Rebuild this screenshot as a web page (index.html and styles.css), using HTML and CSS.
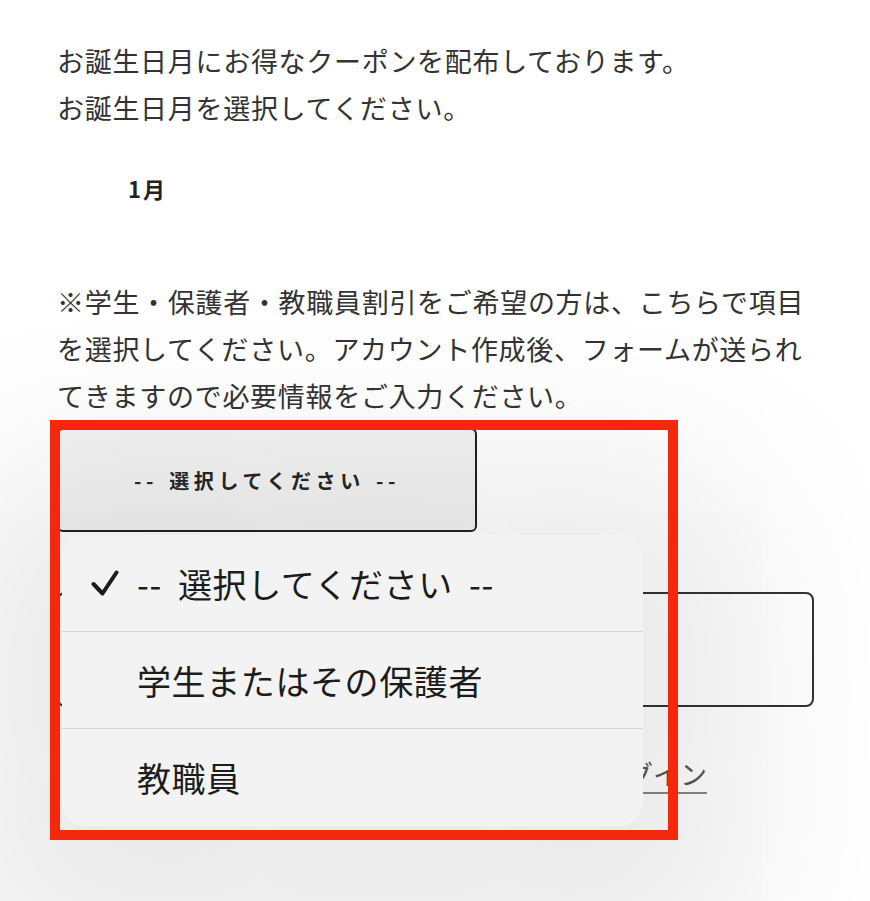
FILE: index.html
```html
<!DOCTYPE html>
<html lang="ja">
<head>
  <meta charset="UTF-8" />
  <meta name="viewport" content="width=device-width, initial-scale=1.0" />
  <title>会員登録</title>
  <link rel="stylesheet" href="styles.css">
</head>
<body>
  <div class="container">
    <p class="lead">お誕生日月にお得なクーポンを配布しております。<br>お誕生日月を選択してください。</p>
    <div class="month">1月</div>
    <p class="note">※学生・保護者・教職員割引をご希望の方は、こちらで項目を選択してください。アカウント作成後、フォームが送られてきますので必要情報をご入力ください。</p>
    <div class="select-btn">-- 選択してください --</div>
    <div class="input-box"></div>
    <a class="login-link" href="#">ログイン</a>
  </div>

  <!-- 選択メニュー -->
  <div class="picker">
    <div class="option">
      <span class="check">
        <svg width="28" height="26" viewBox="0 0 28 26"><path d="M2.5 14 L11.5 23.5 L25.5 2.5" fill="none" stroke="#1c1c1c" stroke-width="4" stroke-linecap="round" stroke-linejoin="round"/></svg>
      </span>-- 選択してください --
    </div>
    <div class="option"><span class="check"></span>学生またはその保護者</div>
    <div class="option"><span class="check"></span>教職員</div>
  </div>

  <!-- 赤枠 -->
  <div class="highlight"></div>
</body>
</html>
```

FILE: styles.css
```css
* {
  margin: 0;
  padding: 0;
  box-sizing: border-box;
  font-family: "Noto Sans CJK JP", "Noto Sans", sans-serif;
}
body, html {
  height: 100%;
  overflow: hidden;
}
body {
  background: #fff;
  position: relative;
  color: #333;
}
.container {
  padding: 37px 56px 0 57px;
}
.lead, .note {
  font-size: 27px;
  line-height: 47px;
  letter-spacing: 0.7px;
}
.month {
  margin-top: 42px;
  padding-left: 71px;
  font-size: 22px;
  font-weight: 700;
  line-height: 30px;
  letter-spacing: 2px;
  color: #222;
}
.note {
  margin-top: 75px;
}
.select-btn {
  margin-top: 9px;
  width: 420px;
  height: 104px;
  border: 2px solid #222;
  border-radius: 6px;
  background: #f3f3f3;
  display: flex;
  align-items: center;
  justify-content: center;
  font-size: 20px;
  font-weight: 700;
  letter-spacing: 4.6px;
  word-spacing: 2px;
  color: #262626;
}
.input-box {
  margin-top: 60px;
  height: 115px;
  border: 2px solid #333;
  border-radius: 8px;
}
.login-link {
  display: inline-block;
  margin: 47px 0 0 542px;
  font-size: 27px;
  line-height: 40px;
  color: #555;
  text-decoration: underline;
  text-underline-offset: 7px;
  text-decoration-thickness: 2px;
  text-decoration-color: #888;
}
.picker {
  position: absolute;
  left: 62px;
  top: 535px;
  width: 581px;
  border-radius: 24px;
  background: #f3f3f3;
  overflow: hidden;
  box-shadow: 0 40px 180px 110px rgba(0,0,0,0.085);
}
.option {
  height: 97px;
  display: flex;
  align-items: center;
  padding-left: 29px;
  font-size: 34px;
  letter-spacing: 0.6px;
  word-spacing: 8px;
  color: #1c1c1c;
  border-bottom: 1px solid #d5d5d5;
}
.option:last-child {
  border-bottom: none;
}
.check {
  width: 46px;
  flex-shrink: 0;
  display: flex;
  align-items: center;
}
.highlight {
  position: absolute;
  left: 50px;
  top: 420px;
  width: 628px;
  height: 420px;
  border: 10px solid #f5270d;
}
```
